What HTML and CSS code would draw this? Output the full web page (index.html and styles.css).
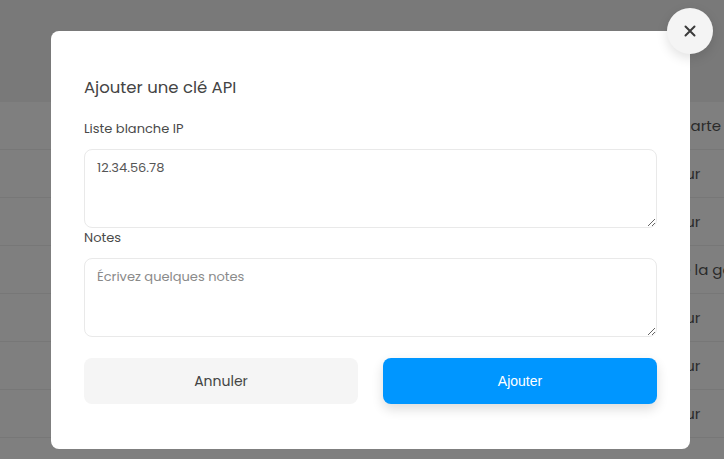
FILE: index.html
```html
<!DOCTYPE html>
<html lang="fr">
<head>
<meta charset="utf-8">
<title>Ajouter une clé API</title>
<link rel="stylesheet" href="styles.css">
</head>
<body>
<div class="page">
  <div class="page-header"></div>
  <div class="table">
    <div class="row head"><span class="cell">Carte</span></div>
    <div class="row"><span class="cell">Valeur</span></div>
    <div class="row"><span class="cell">Valeur</span></div>
    <div class="row"><span class="cell la">de la galerie</span></div>
    <div class="row"><span class="cell">Valeur</span></div>
    <div class="row"><span class="cell">Valeur</span></div>
    <div class="row"><span class="cell">Valeur</span></div>
    <div class="row last"><span class="cell-left">Millionnaire</span><span class="cell wide">Créé le 12 mai</span></div>
  </div>
</div>
<div class="overlay"></div>
<div class="modal">
  <h2 class="title">Ajouter une clé API</h2>
  <label class="label" for="ip">Liste blanche IP</label>
  <textarea id="ip" class="field">12.34.56.78</textarea>
  <label class="label label-notes" for="notes">Notes</label>
  <textarea id="notes" class="field field-notes" placeholder="Écrivez quelques notes"></textarea>
  <div class="actions">
    <button class="btn btn-cancel">Annuler</button>
    <button class="btn btn-add">Ajouter</button>
  </div>
  <button class="close" aria-label="Fermer">
    <svg width="12" height="12" viewBox="0 0 12 12"><path d="M1.5 1.5 L10.5 10.5 M10.5 1.5 L1.5 10.5" stroke="#3a3a3a" stroke-width="2" stroke-linecap="round"/></svg>
  </button>
</div>
</body>
</html>
```
FILE: styles.css
```css
* { box-sizing: border-box; }
html, body { margin: 0; padding: 0; }
body {
  width: 724px;
  height: 459px;
  overflow: hidden;
  position: relative;
  font-family: "Poppins", "Open Sans", "DejaVu Sans", sans-serif;
  background: #ffffff;
}
.page { width: 724px; height: 459px; overflow: hidden; }
.page-header { height: 102px; background: #f2f2f2; }
.table { display: flex; flex-direction: column; }
.row {
  height: 48px;
  flex: none;
  display: flex;
  align-items: center;
  border-bottom: 1px solid #eeeeee;
  font-size: 15px;
  color: #555555;
}
.cell { margin-left: 652px; white-space: nowrap; }
.head .cell { margin-left: 679px; }
.cell.la { margin-left: 671px; }
.row.last { height: 28px; align-items: flex-end; border: none; }
.cell-left { margin-left: 120px; font-size: 14px; line-height: 18px; margin-bottom: -12px; }
.cell.wide { margin-left: 372px; font-size: 14px; line-height: 18px; margin-bottom: -12px; }
.overlay {
  position: absolute;
  inset: 0;
  background: rgba(0, 0, 0, 0.5);
}
.modal {
  position: absolute;
  left: 51px;
  top: 31px;
  width: 639px;
  height: 418px;
  background: #ffffff;
  border-radius: 8px;
  padding: 45px 33px 44px 33px;
  display: flex;
  flex-direction: column;
}
.title {
  margin: 0 0 19px 0;
  font-size: 16.5px;
  line-height: 24px;
  font-weight: 400;
  color: #444444;
}
.label {
  font-size: 13px;
  line-height: 20px;
  color: #4a4a4a;
  margin-bottom: 10px;
}
.field {
  display: block;
  width: 573px;
  height: 79px;
  margin: 0;
  border: 1px solid #e9e9e9;
  border-radius: 8px;
  padding: 9px 12px;
  font-family: inherit;
  font-size: 13px;
  line-height: 18px;
  color: #555555;
  background: #ffffff;
  outline: none;
}
.field::placeholder { color: #8a8a8a; }
.actions {
  margin-top: 21px;
  display: flex;
  gap: 25px;
}
.btn {
  flex: 1;
  height: 46px;
  border: none;
  border-radius: 8px;
  font-size: 14px;
  cursor: pointer;
}
.btn-cancel {
  background: #f5f5f5;
  color: #444444;
  font-family: inherit;
}
.btn-add {
  background: #0096ff;
  color: #ffffff;
  font-family: "Liberation Sans", Arial, sans-serif;
  font-weight: 500;
  box-shadow: 0 5px 12px rgba(0, 0, 0, 0.14);
}
.close {
  position: absolute;
  right: -23px;
  top: -23px;
  width: 46px;
  height: 46px;
  border-radius: 50%;
  border: none;
  background: #f4f4f4;
  box-shadow: 0 4px 12px rgba(0, 0, 0, 0.12);
  display: flex;
  align-items: center;
  justify-content: center;
  padding: 0;
}
```
